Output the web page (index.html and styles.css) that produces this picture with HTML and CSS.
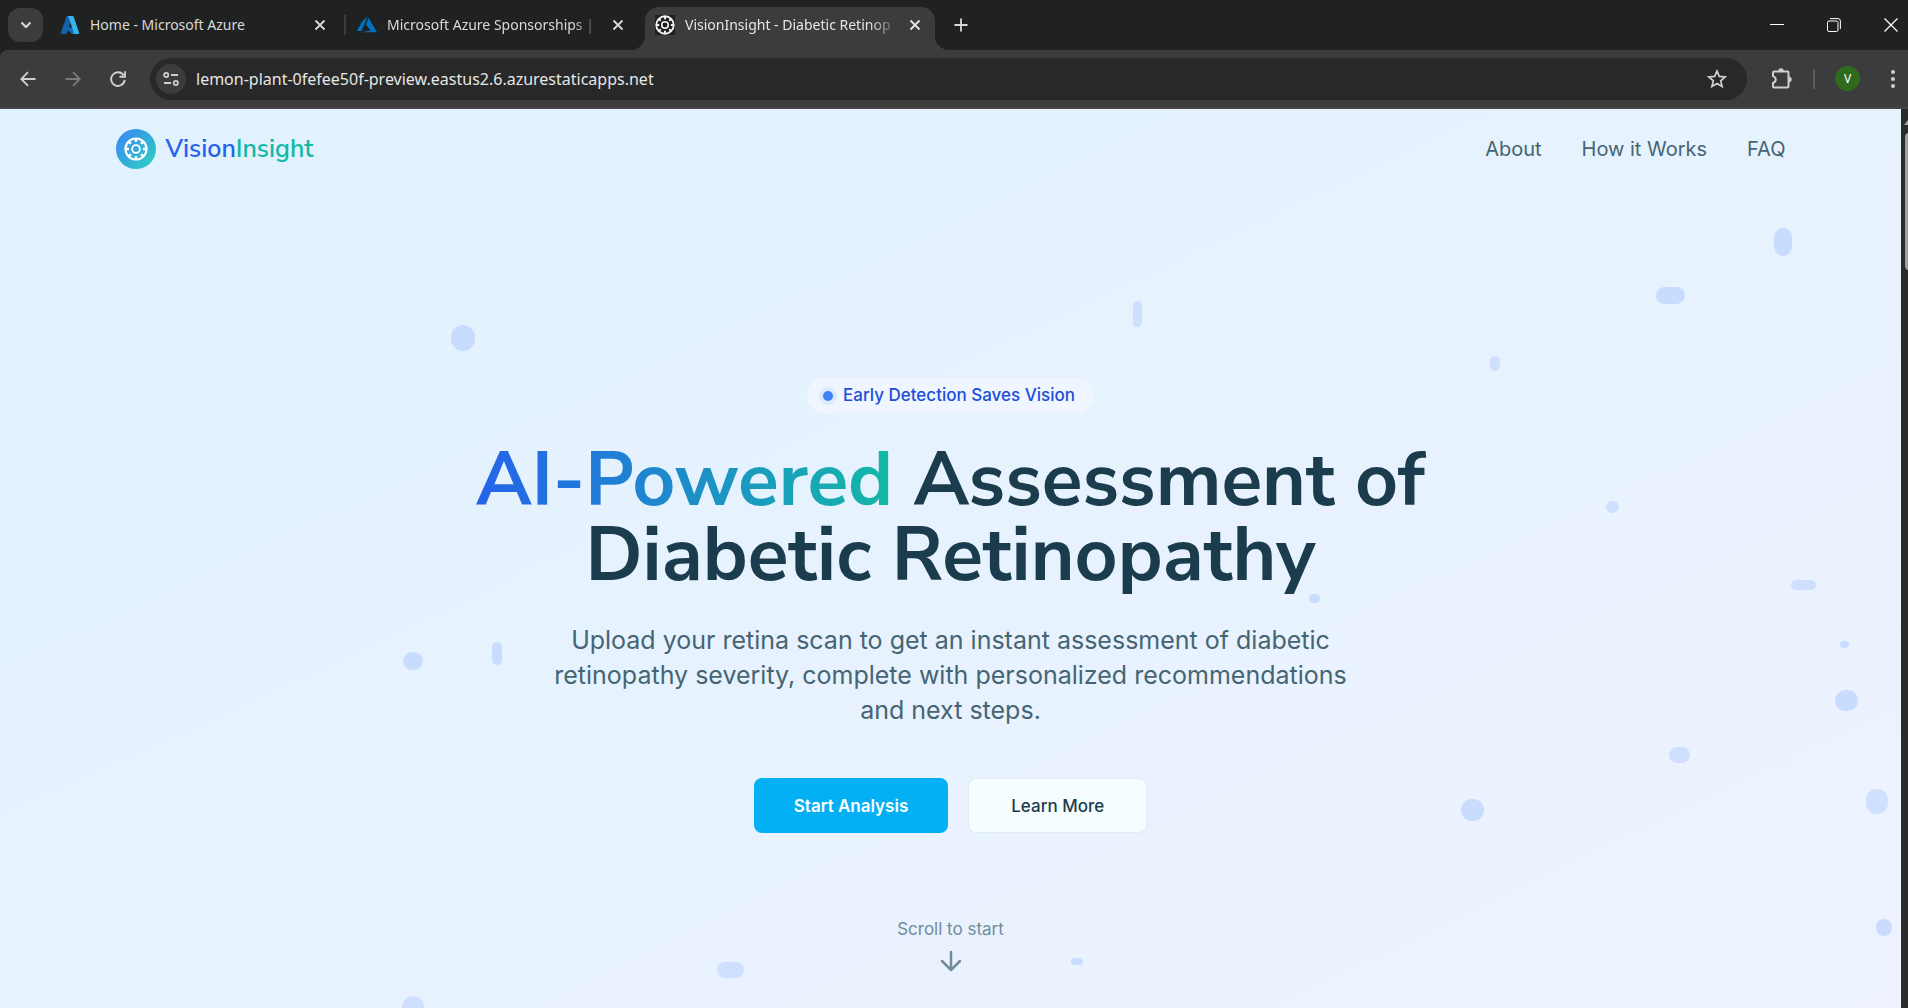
FILE: index.html
```html
<!DOCTYPE html>
<html lang="en">
<head>
<meta charset="utf-8">
<title>VisionInsight - Diabetic Retinopathy</title>
<link rel="stylesheet" href="styles.css">
</head>
<body>
<svg width="0" height="0" class="defs" aria-hidden="true">
  <symbol id="eye" viewBox="0 0 24 24">
    <g fill="none" stroke="currentColor">
      <circle cx="12" cy="12" r="10.5" stroke-width="2.2"/>
      <circle cx="12" cy="12" r="3.9" stroke-width="1.9"/>
      <path stroke-width="2.4" d="M12 2v3M12 19V22M2 12h3M19 12H22M4.900 4.900l2 2M17.100 17.100l2 2M4.900 19.100l2-2M17.100 6.900l2-2"/>
    </g>
  </symbol>
  <symbol id="cross" viewBox="0 0 12 12"><path d="M1.5 1.5l9 9m0-9l-9 9" fill="none" stroke="currentColor" stroke-width="1.8"/></symbol>
</svg>

<div class="tabstrip">
  <button class="tab-search" aria-label="Search tabs"><svg width="12" height="8" viewBox="0 0 12 8"><path d="M1.5 1.5L6 6l4.500-4.500" fill="none" stroke="currentColor" stroke-width="2"/></svg></button>
  <div class="tab first">
    <svg class="favicon" viewBox="0 0 20 20"><path d="M6.800 1h5.900L6.800 19H1.500q-1 0-.700-1.200z" fill="#1560ac"/><path d="M5.500 12.500h9l1 6.500H12z" fill="#0f6cbd"/><path d="M7.500 1h5q1 0 1.300 1l5.300 15.800q.300 1.200-1 1.200h-5.200q1.200-.300.900-1.400L8.500 2q-.300-.9-1-1z" fill="#35b5ec"/></svg>
    <span class="tab-title">Home - Microsoft Azure</span>
    <button class="tab-close" aria-label="Close tab"><svg width="12" height="12"><use href="#cross"/></svg></button>
  </div>
  <div class="tab second">
    <svg class="favicon" viewBox="0 0 20 20"><path d="M10.600 1.500L5 6.500 0 16h4.500zM11.400 2.700L9 9.700l4.600 5.800-9 1.700H20z" fill="#0072c6"/></svg>
    <span class="tab-title fade">Microsoft Azure Sponsorships |</span>
    <button class="tab-close" aria-label="Close tab"><svg width="12" height="12"><use href="#cross"/></svg></button>
  </div>
  <div class="tab active">
    <svg class="favicon boxed"><use href="#eye"/></svg>
    <span class="tab-title fade">VisionInsight - Diabetic Retinop</span>
    <button class="tab-close" aria-label="Close tab"><svg width="12" height="12"><use href="#cross"/></svg></button>
  </div>
  <button class="new-tab" aria-label="New tab"><svg width="14" height="14" viewBox="0 0 14 14"><path d="M7 .500v13M.500 7h13" stroke="currentColor" stroke-width="1.800"/></svg></button>
  <div class="window-controls">
    <button aria-label="Minimize"><svg width="14" height="14" viewBox="0 0 14 14"><path d="M0 6.500h14" stroke="currentColor"/></svg></button>
    <button aria-label="Restore"><svg width="14" height="14" viewBox="0 0 14 14" fill="none" stroke="currentColor"><rect x=".5" y="3" width="10.500" height="10.500" rx="1.500"/><path d="M3 .600h8q2.400 0 2.400 2.400v8"/></svg></button>
    <button aria-label="Close window"><svg width="14" height="14" viewBox="0 0 14 14"><path d="M.5.5l13 13m0-13l-13 13" stroke="currentColor" stroke-width="1.200"/></svg></button>
  </div>
</div>

<div class="toolbar">
  <div class="nav-buttons">
    <button aria-label="Back"><svg width="16" height="16" viewBox="0 0 16 16" fill="none" stroke="currentColor" stroke-width="1.800"><path d="M15.500 8H1.500M8 1.200L1.300 8 8 14.800"/></svg></button>
    <button class="disabled" aria-label="Forward"><svg width="16" height="16" viewBox="0 0 16 16" fill="none" stroke="currentColor" stroke-width="1.800"><path d="M.5 8h14M8 1.200L14.700 8 8 14.800"/></svg></button>
    <button aria-label="Reload"><svg width="16" height="16" viewBox="0 0 16 16" fill="none" stroke="currentColor" stroke-width="1.900"><path d="M13.600 4.300A6.800 6.800 0 1 0 14.700 9M15 .300v5.500H9.500"/></svg></button>
  </div>
  <div class="omnibox">
    <button class="site-info" aria-label="View site information"><svg width="16" height="16" viewBox="0 0 16 16" fill="none" stroke="currentColor" stroke-width="1.800"><circle cx="3.200" cy="4" r="2.100"/><path d="M8 4h7M1 12h7"/><circle cx="12.800" cy="12" r="2.100"/></svg></button>
    <input class="url" type="text" aria-label="Address" value="lemon-plant-0fefee50f-preview.eastus2.6.azurestaticapps.net">
    <button class="star" aria-label="Bookmark this tab"><svg width="20" height="20" viewBox="0 0 20 20"><path d="M10 2l2.300 5.400 5.900.5-4.500 3.900 1.400 5.700L10 14.500l-5.100 3 1.400-5.700L1.800 7.900l5.900-.5z" fill="none" stroke="currentColor" stroke-width="1.700"/></svg></button>
  </div>
  <button class="extensions" aria-label="Extensions"><svg width="22" height="22" viewBox="0 0 22 22"><path d="M3 3.500h13.500q1 0 1 1v14q0 1-1 1H3q-1 0-1-1v-3.600q2.700-.9 2.700-3.400T2 8.100V4.500q0-1 1-1z" fill="none" stroke="currentColor" stroke-width="2"/><path d="M7.300 3a2.700 2.700 0 0 1 5.400 0zM18 8.800a2.700 2.700 0 0 1 0 5.400z" fill="currentColor"/></svg></button>
  <span class="divider"></span>
  <button class="profile" aria-label="Profile">V</button>
  <button class="menu" aria-label="Menu"><svg width="4" height="18" viewBox="0 0 4 18" fill="currentColor"><circle cx="2" cy="2" r="2"/><circle cx="2" cy="9" r="2"/><circle cx="2" cy="16" r="2"/></svg></button>
</div>

<div class="viewport">
  <div class="page">
    <div class="particles" aria-hidden="true">
      <i style="left:1774px;top:119px;width:18px;height:28px"></i>
      <i style="left:1656px;top:178px;width:29px;height:17px"></i>
      <i class="light" style="left:1133px;top:192px;width:9px;height:26px"></i>
      <i class="light" style="left:1490px;top:247px;width:10px;height:15px"></i>
      <i class="light" style="left:1606px;top:392px;width:13px;height:12px"></i>
      <i class="light" style="left:1791px;top:471px;width:25px;height:10px"></i>
      <i style="left:1840px;top:532px;width:9px;height:7px"></i>
      <i style="left:1835px;top:581px;width:23px;height:21px"></i>
      <i class="light" style="left:1669px;top:638px;width:21px;height:16px"></i>
      <i style="left:1461px;top:690px;width:23px;height:22px"></i>
      <i class="light" style="left:1866px;top:680px;width:22px;height:25px"></i>
      <i style="left:1876px;top:810px;width:16px;height:17px"></i>
      <i style="left:451px;top:216px;width:24px;height:26px"></i>
      <i style="left:403px;top:543px;width:20px;height:18px"></i>
      <i style="left:492px;top:533px;width:10px;height:23px"></i>
      <i style="left:1309px;top:485px;width:11px;height:9px"></i>
      <i class="light" style="left:717px;top:853px;width:27px;height:16px"></i>
      <i style="left:1071px;top:849px;width:12px;height:7px"></i>
      <i class="light" style="left:402px;top:887px;width:22px;height:22px"></i>
    </div>
    <header class="site-header">
      <a class="brand" href="#">
        <span class="brand-mark"><svg width="24" height="24"><use href="#eye"/></svg></span>
        <span class="brand-name"><span class="blue">Vision</span><span class="teal">Insight</span></span>
      </a>
      <nav class="site-nav">
        <a href="#about">About</a>
        <a href="#how">How it Works</a>
        <a href="#faq">FAQ</a>
      </nav>
    </header>
    <main class="hero">
      <div class="badge"><span class="dot"></span>Early Detection Saves Vision</div>
      <h1><span class="gradient">AI-Powered</span> Assessment of Diabetic Retinopathy</h1>
      <p class="lead">Upload your retina scan to get an instant assessment of diabetic retinopathy severity, complete with personalized recommendations and next steps.</p>
      <div class="actions">
        <button class="btn primary">Start Analysis</button>
        <button class="btn secondary">Learn More</button>
      </div>
      <a class="scroll-hint" href="#analysis">Scroll to start
        <svg width="22" height="22" viewBox="0 0 22 22" fill="none" stroke="currentColor" stroke-width="2.500" stroke-linecap="round" stroke-linejoin="round"><path d="M11 2v18M2 11l9 9 9-9"/></svg>
      </a>
    </main>
  </div>
  <div class="scrollbar" aria-hidden="true"><span class="arrow"></span><span class="thumb"></span></div>
</div>
</body>
</html>
```
FILE: styles.css
```css
* { box-sizing: border-box; }
html, body { height: 100%; margin: 0; }
body {
  display: flex;
  flex-direction: column;
  overflow: hidden;
  background: #202221;
  font-family: Inter, "Liberation Sans", sans-serif;
}
button { padding: 0; border: 0; background: none; color: inherit; font: inherit; display: grid; place-items: center; }
a { color: inherit; text-decoration: none; }
svg { display: block; flex: none; }
.defs { position: absolute; }

/* Browser tabs */
.tabstrip {
  display: flex;
  align-items: center;
  height: 50px;
  flex: none;
  padding-left: 8px;
  background: #202221;
  color: #dadada;
  font: 14px/20px "Noto Sans", "Open Sans", sans-serif;
}
.tab-search { width: 35px; height: 34px; border-radius: 12px; background: #3c3c3c; }
.tab {
  display: flex;
  align-items: center;
  gap: 10px;
  width: 299px;
  height: 43px;
  padding: 0 16px;
}
.tab.first { width: 303px; padding: 0 18px 0 17px; border-right: 2px solid #3c3c3c; height: 20px; }
.tab.second { padding: 0 21px 0 11px; }
.tab.active {
  position: relative;
  align-self: flex-end;
  width: 290px;
  padding: 0 14px 7px 10px;
  border-radius: 14px 14px 0 0;
  background: #3c3c3c;
  color: #e6e6e6;
}
.tab.active::before, .tab.active::after {
  content: "";
  position: absolute;
  bottom: 0;
  width: 14px;
  height: 14px;
}
.tab.active::before { right: 100%; background: radial-gradient(circle at 0 0, transparent 14px, #3c3c3c 14px); }
.tab.active::after { left: 100%; background: radial-gradient(circle at 100% 0, transparent 14px, #3c3c3c 14px); }
.favicon { width: 20px; height: 20px; }
.boxed { background: #202020; color: #f4f4f4; }
.tab-title { flex: 1; min-width: 0; white-space: nowrap; }
.fade { -webkit-mask-image: linear-gradient(to left, transparent, #000 30px); mask-image: linear-gradient(to left, transparent, #000 30px); }
.tab-close { width: 12px; height: 20px; }
.new-tab { width: 28px; height: 28px; margin-left: 12px; }
.window-controls { display: flex; margin-left: auto; color: #fff; }
.window-controls button { width: 57px; height: 48px; }
.window-controls button:last-child { width: 46px; padding-left: 12px; }

/* Address bar */
.toolbar {
  display: flex;
  align-items: center;
  height: 59px;
  flex: none;
  padding: 0 13px 0 20px;
  border-bottom: 2px solid #484547;
  background:
    radial-gradient(circle at 8px 8px, #3c3c3c 8px, #202221 8px) 0 0 / 8px 8px no-repeat,
    #3c3c3c;
  color: #cfcfcf;
}
.nav-buttons { display: flex; gap: 29px; width: 130px; }
.disabled { color: #7b7b7b; }
.omnibox {
  display: flex;
  align-items: center;
  flex: 1;
  height: 42px;
  padding: 0 20px 0 6px;
  border-radius: 21px;
  background: #282828;
}
.site-info { width: 30px; height: 30px; border-radius: 50%; background: #3c3c3c; }
.url {
  flex: 1;
  min-width: 0;
  margin-left: 10px;
  padding: 0;
  border: 0;
  outline: 0;
  background: none;
  color: #e6e6e6;
  font: 16px/24px "Noto Sans", "Open Sans", sans-serif;
}
.extensions { margin-left: 24px; }
.divider { width: 2px; height: 20px; margin: 0 20px; background: #5c5c5c; }
.profile { width: 25px; height: 25px; border-radius: 50%; background: #2f6b1d; color: #fff; font: 12px/25px "Noto Sans", sans-serif; }
.menu { margin-left: 31px; }

/* Page and scrollbar */
.viewport { display: flex; flex: 1; min-height: 0; }
.page {
  position: relative;
  flex: 1;
  min-width: 0;
  overflow: hidden;
  background: linear-gradient(to bottom right, #e0f2fe, #eef2ff);
}
.scrollbar { width: 7px; padding: 8px 0 0 4px; overflow: hidden; background: #2b2b2b; }
.arrow { display: block; width: 0; border: 6px solid transparent; border-top: 0; border-bottom: 8px solid #9f9f9f; margin: 0 0 8px -1px; }
.thumb { display: block; width: 8px; height: 137px; border-radius: 4px; background: #9f9f9f; }

.particles { position: absolute; inset: 0; }
.particles i { position: absolute; border-radius: 12px; background: #c8ddfd; }
.particles .light { background: #cfe0fe; }

/* Site header */
.site-header {
  position: relative;
  display: flex;
  align-items: center;
  justify-content: space-between;
  max-width: 1750px;
  height: 80px;
  margin: 0 auto;
  padding: 0 40px;
}
.brand { display: flex; align-items: center; gap: 10px; }
.brand-mark {
  display: grid;
  place-items: center;
  width: 40px;
  height: 40px;
  border-radius: 50%;
  background: linear-gradient(to bottom right, #3b82f6, #2dd4bf);
  color: #fff;
}
.brand-name { font: 600 25px/36px "Nunito Sans", Nunito, Lato, sans-serif; }
.blue { color: #2563eb; }
.teal { color: #14b8a6; }
.site-nav { display: flex; gap: 40px; color: #456573; font-size: 20px; line-height: 30px; }

/* Hero */
.hero {
  position: relative;
  display: flex;
  flex-direction: column;
  align-items: center;
  padding: 189px 40px 0;
  text-align: center;
}
.badge {
  display: flex;
  align-items: center;
  gap: 10px;
  padding: 5px 19px 5px 16px;
  border-radius: 18px;
  background: #eff6ff;
  color: #1d4ed8;
  font-size: 17px;
  font-weight: 500;
  line-height: 25px;
}
.dot { width: 10px; height: 10px; border-radius: 50%; background: #3b82f6; box-shadow: 0 0 0 4px #dbeafe; }
h1 {
  max-width: 1120px;
  margin: 30px 0 0;
  color: #1b3c4d;
  font: 700 75px/75px "Nunito Sans", Nunito, Lato, sans-serif;
}
.gradient {
  background: linear-gradient(to right, #2563eb, #14b8a6);
  -webkit-background-clip: text;
  background-clip: text;
  color: transparent;
}
.lead {
  max-width: 840px;
  margin: 30px 0 0;
  color: #456573;
  font-size: 25px;
  line-height: 35px;
}
.actions { display: flex; gap: 20px; margin-top: 50px; }
.btn { height: 55px; padding: 0 40px; border-radius: 8px; font-size: 17px; }
.primary { background: #03b0f3; color: #fff; font-weight: 600; }
.secondary { border: 1px solid #dfecf1; padding: 0 42px; background: #f5fdff; color: #1b3c4d; font-weight: 500; }
.scroll-hint {
  display: flex;
  flex-direction: column;
  align-items: center;
  gap: 8px;
  margin-top: 84px;
  color: #708c99;
  font-size: 17px;
  line-height: 25px;
}
```
